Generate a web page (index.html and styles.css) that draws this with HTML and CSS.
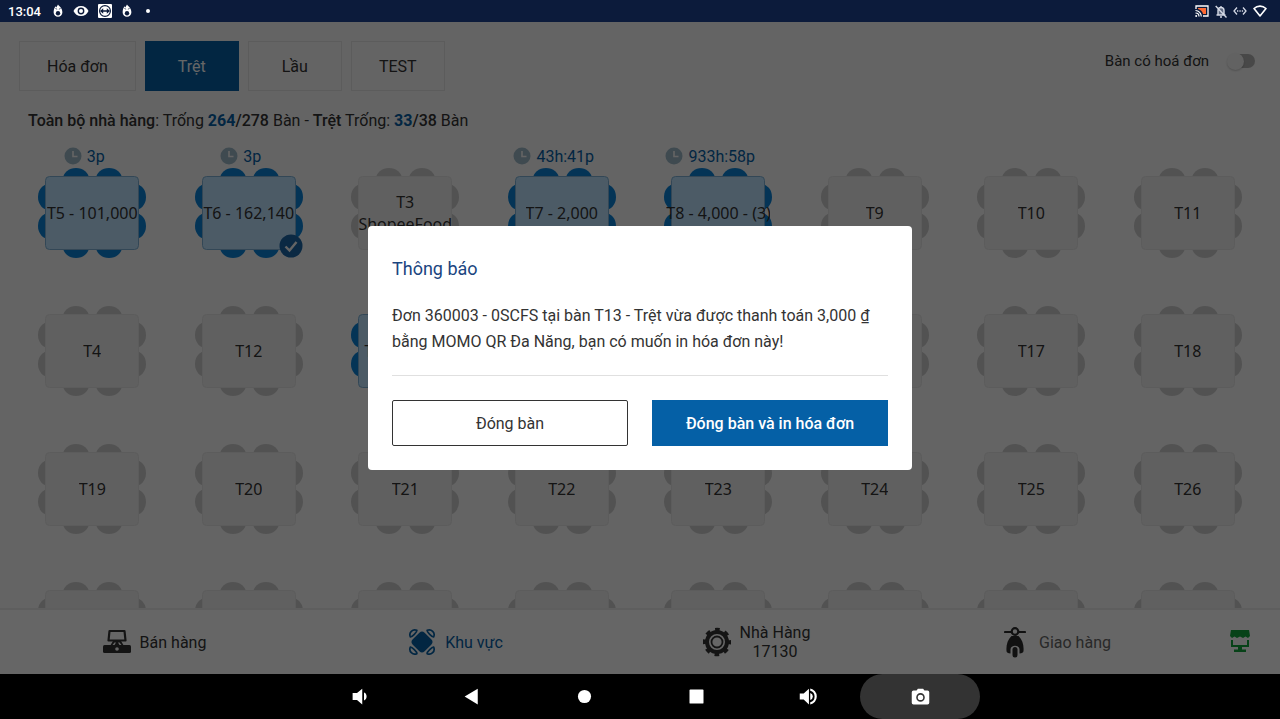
FILE: index.html
```html
<!DOCTYPE html>
<html lang="vi">
<head>
  <meta charset="UTF-8">
  <meta name="viewport" content="width=device-width, initial-scale=1.0">
  <title>Khu vực - Nhà Hàng</title>
  <link rel="stylesheet" href="styles.css">
</head>
<body>
  <!-- Shared shapes -->
  <svg class="defs" aria-hidden="true">
    <symbol id="table" viewBox="0 0 108 90">
      <g fill="currentColor">
        <ellipse cx="38" cy="11" rx="13" ry="11"/>
        <ellipse cx="71" cy="11" rx="13" ry="11"/>
        <ellipse cx="38" cy="79" rx="13" ry="11"/>
        <ellipse cx="71" cy="79" rx="13" ry="11"/>
        <ellipse cx="11" cy="29" rx="11" ry="13"/>
        <ellipse cx="11" cy="58" rx="11" ry="13"/>
        <ellipse cx="97" cy="29" rx="11" ry="13"/>
        <ellipse cx="97" cy="58" rx="11" ry="13"/>
      </g>
      <rect class="table-top" x="7.5" y="8.5" width="93" height="73" rx="4"/>
    </symbol>
    <symbol id="clock" viewBox="0 0 18 18">
      <circle cx="9" cy="9" r="8.5" fill="currentColor"/>
      <path d="M9 4v5.5h4.5" fill="none" stroke="#fafafa" stroke-width="1.6"/>
    </symbol>
    <symbol id="check" viewBox="0 0 24 24">
      <circle cx="12" cy="12" r="11.5" fill="currentColor"/>
      <path d="M6.5 12.5l4 4 7-8.5" fill="none" stroke="#fafafa" stroke-width="2.4"/>
    </symbol>
    <symbol id="flame" viewBox="0 0 12 16">
      <path d="M6 .5c1 2 5 3.500 5 9a5 5 0 0 1-10 0C1 6.500 2 4 3.200 2.500L4 4z" fill="#fff"/>
      <circle cx="6" cy="10.500" r="2.500" fill="#0c1b3b"/>
      <path d="M3 5l2 1M9 5L7 6" stroke="#0c1b3b" stroke-width=".8"/>
    </symbol>
  </svg>

  <div class="status-bar">
    <div class="status-left">
      <span class="time">13:04</span>
      <svg width="12" height="14"><use href="#flame"/></svg>
      <svg width="16" height="12" viewBox="0 0 16 12">
        <path d="M8 1C4.500 1 1.800 3 .5 6c1.300 3 4 5 7.500 5s6.200-2 7.500-5C14.200 3 11.500 1 8 1z" fill="#fff"/>
        <circle cx="8" cy="6" r="3.400" fill="#0c1b3b"/>
        <circle cx="8" cy="6" r="2" fill="#fff"/>
      </svg>
      <svg width="14" height="14" viewBox="0 0 14 14">
        <rect width="14" height="14" rx="1" fill="#fff"/>
        <circle cx="7" cy="7" r="5.400" fill="none" stroke="#0c1b3b" stroke-width="1.200"/>
        <path d="M2 7l3.200-2.800v2h3.600v-2L12 7 8.800 9.800v-2H5.200v2z" fill="#0c1b3b"/>
      </svg>
      <svg width="12" height="14"><use href="#flame"/></svg>
      <span class="dot"></span>
    </div>
    <div class="status-right">
      <svg width="14" height="12" viewBox="0 0 14 12">
        <path d="M1 4V1h12v10H8" fill="none" stroke="#fff" stroke-width="1.300"/>
        <path d="M3 3h8v6H8C7.500 6.500 5.500 4.500 3 4z" fill="#ff6b35"/>
        <path d="M.5 5.500A6 6 0 0 1 6.300 11.500M.5 8A3.500 3.500 0 0 1 4 11.500" fill="none" stroke="#fff" stroke-width="1.200"/>
        <circle cx="1.200" cy="11" r="1" fill="#fff"/>
      </svg>
      <svg width="12" height="13" viewBox="0 0 12 13">
        <path d="M3 10V5.500A3 3 0 0 1 9 5.500V10z" fill="#d5dae6" fill-opacity=".4"/>
        <path d="M1.500 10h9M3 10V5.500A3 3 0 0 1 9 5.500V10M6 1v1.500M5 12h2M.7 1L11.500 12.500" fill="none" stroke="#d5dae6" stroke-width="1.400"/>
      </svg>
      <svg width="14" height="10" viewBox="0 0 14 10" fill="none" stroke="#d5dae6" stroke-width="1.300">
        <path d="M4 1.500L1 5l3 3.500M10 1.500L13 5l-3 3.500"/>
        <path d="M4 5h1.300M6.400 5h1.300M8.800 5h1.300"/>
      </svg>
      <svg width="14" height="12" viewBox="0 0 14 12" fill="none" stroke="#fff" stroke-width="1.600">
        <path d="M7 11L1 3.500C4.500.3 9.500.3 13 3.500z" stroke-linejoin="round"/>
      </svg>
    </div>
  </div>

  <div class="app">
    <main class="area">
      <div class="toolbar">
        <div class="tabs">
          <button class="tab">Hóa đơn</button>
          <button class="tab active">Trệt</button>
          <button class="tab">Lầu</button>
          <button class="tab">TEST</button>
        </div>
        <label class="toggle" for="has-bill">
          Bàn có hoá đơn
          <input type="checkbox" id="has-bill">
        </label>
      </div>
      <p class="summary"><b>Toàn bộ nhà hàng</b>: Trống <b><i>264</i>/278</b> Bàn - <b>Trệt</b> Trống: <b><i>33</i>/38</b> Bàn</p>
      <div class="tables" id="tables"></div>
    </main>

    <nav class="menu">
      <a class="menu-item" href="#">
        <svg width="28" height="26" viewBox="0 0 28 26">
          <path d="M6.500 2h15l1 9.500h-17z" fill="none" stroke="currentColor" stroke-width="2.200" stroke-linejoin="round"/>
          <path d="M10 12h8l3 5H7z" fill="currentColor"/>
          <path d="M11.500 13.500h1.500l-1.500 2.500H9.500zM15 13.500h1.500l2 2.500h-2z" fill="#fff"/>
          <rect x="0" y="16" width="28" height="8" rx="1.500" fill="currentColor"/>
          <circle cx="14" cy="20" r="1.800" fill="#fff"/>
        </svg>
        <span>Bán hàng</span>
      </a>
      <a class="menu-item active" href="#">
        <svg width="28" height="28" viewBox="0 0 30 30">
          <rect x="6" y="6" width="18" height="18" rx="4" transform="rotate(45 15 15)" fill="#0560a6"/>
          <g fill="none" stroke="currentColor" stroke-width="1.800" stroke-linejoin="round">
            <path d="M2.500 9.500C.5 5 5 .5 9.500 2.500 10 4 4 10 2.500 9.500z"/>
            <path d="M27.500 9.500C29.500 5 25 .5 20.500 2.500 20 4 26 10 27.500 9.500z"/>
            <path d="M2.500 20.500C.5 25 5 29.500 9.500 27.500 10 26 4 20 2.500 20.500z"/>
            <path d="M27.500 20.500C29.500 25 25 29.500 20.500 27.500 20 26 26 20 27.500 20.500z"/>
          </g>
        </svg>
        <span>Khu vực</span>
      </a>
      <a class="menu-item" href="#">
        <svg width="28" height="30" viewBox="1 0 28 30">
          <g fill="none" stroke="currentColor">
            <circle cx="15" cy="15" r="10" stroke-width="4"/>
            <circle cx="15" cy="15" r="12.500" stroke-width="3.500" stroke-dasharray="4.600 5.217" stroke-dashoffset="2.300"/>
            <circle cx="15" cy="15" r="5.500" stroke-width="1.800"/>
          </g>
        </svg>
        <span>Nhà Hàng<br>17130</span>
      </a>
      <a class="menu-item muted" href="#">
        <svg width="22" height="32" viewBox="1 0 22 32">
          <g fill="none" stroke="#2b2b2b" stroke-width="2.200" stroke-linecap="round">
            <path d="M2 6h6M16 6h6"/>
            <circle cx="12" cy="5.500" r="3.300"/>
          </g>
          <path d="M8.500 10h7c4 4 5.500 9 5 15 0 1.500-1.500 2.500-4 2.500v-4c0-5-9-5-9 0v4c-2.500 0-4-1-4-2.500C3 19 4.500 14 8.500 10z" fill="#2b2b2b"/>
          <rect x="9.500" y="21" width="5" height="10.500" rx="2.500" fill="#2b2b2b"/>
        </svg>
        <span>Giao hàng</span>
      </a>
      <a class="menu-item shop" href="#" aria-label="Cửa hàng">
        <svg width="20" height="24" viewBox="0 0 20 24" fill="currentColor">
          <path d="M1 0h18l1 6-2 2-2.500-1.500L13 8l-3-1.500L7 8 4.500 6.500 2 8 0 6z"/>
          <path d="M1 10h2v5h14v-5h2v7h-7v2.500h4V22H4v-2.500h4V17H1z"/>
        </svg>
      </a>
    </nav>

    <div class="overlay">
      <section class="dialog" role="dialog" aria-labelledby="dialog-title">
        <h2 id="dialog-title">Thông báo</h2>
        <p>Đơn 360003 - 0SCFS tại bàn T13 - Trệt vừa được thanh toán 3,000 ₫ bằng MOMO QR Đa Năng, bạn có muốn in hóa đơn này!</p>
        <div class="dialog-actions">
          <button class="btn">Đóng bàn</button>
          <button class="btn btn-primary">Đóng bàn và in hóa đơn</button>
        </div>
      </section>
    </div>
  </div>

  <div class="nav-bar">
    <button aria-label="Giảm âm lượng">
      <svg viewBox="0 0 24 24"><path d="M3 8v8h5l6 5V3L8 8zM16 7.500c4 1 4 8 0 9z"/></svg>
    </button>
    <button aria-label="Quay lại">
      <svg viewBox="0 0 24 24"><path d="M3 12L18 3v18z"/></svg>
    </button>
    <button aria-label="Trang chủ">
      <svg viewBox="0 0 24 24"><circle cx="12" cy="12" r="7.500"/></svg>
    </button>
    <button aria-label="Gần đây">
      <svg viewBox="0 0 24 24"><rect x="4" y="4" width="16" height="16" rx="1"/></svg>
    </button>
    <button aria-label="Tăng âm lượng">
      <svg viewBox="0 0 24 24"><path d="M2 8.500v7h4.500l6 5.500V3l-6 5.500zM17 12a4.500 4.500 0 0 0-3-4v8a4.500 4.500 0 0 0 3-4zM14 2.800v2.500a7 7 0 0 1 0 13.400v2.500a9.400 9.400 0 0 0 0-18.400z"/></svg>
    </button>
    <button class="capture" aria-label="Chụp màn hình">
      <svg viewBox="0 0 24 24"><path d="M9 3L7.500 5H4a2 2 0 0 0-2 2v12a2 2 0 0 0 2 2h16a2 2 0 0 0 2-2V7a2 2 0 0 0-2-2h-3.500L15 3z"/><circle cx="12" cy="13" r="4" fill="none" stroke="#333" stroke-width="1.800"/></svg>
    </button>
  </div>

  <script>
    // Tables of the current area
    const tables = [
      { name: 'T5 - 101,000', time: '3p' },
      { name: 'T6 - 162,140', time: '3p', checked: true },
      { name: 'T3<br>ShopeeFood' },
      { name: 'T7 - 2,000', time: '43h:41p' },
      { name: 'T8 - 4,000 - (3)', time: '933h:58p' },
      { name: 'T9' }, { name: 'T10' }, { name: 'T11' },
      { name: 'T4' }, { name: 'T12' },
      { name: 'T13 - 3,000', busy: true }
    ];
    for (let i = 14; i <= 34; i++) {
      tables.push({ name: 'T' + i });
    }

    document.getElementById('tables').innerHTML = tables.map(t => `
      <div class="table-item ${t.time || t.busy ? 'busy' : ''}">
        <div class="table-time">${t.time ? `<svg width="18" height="18"><use href="#clock"/></svg>${t.time}` : ''}</div>
        <button class="table-btn">
          <svg class="table-shape" width="108" height="90"><use href="#table"/></svg>
          <span class="table-name">${t.name}</span>
          ${t.checked ? '<svg class="table-check" width="24" height="24"><use href="#check"/></svg>' : ''}
        </button>
      </div>`).join('');
  </script>
</body>
</html>
```
FILE: styles.css
```css
* {
  box-sizing: border-box;
}
body {
  margin: 0;
  height: 100vh;
  display: flex;
  flex-direction: column;
  overflow: hidden;
  font-family: Roboto, sans-serif;
  font-size: 16px;
  color: #333;
  background: #000;
}
button {
  font: inherit;
  color: inherit;
  cursor: pointer;
}
svg {
  flex: none;
}
.defs {
  position: absolute;
  width: 0;
  height: 0;
}

/* Status bar */
.status-bar {
  display: flex;
  flex: none;
  justify-content: space-between;
  height: 22px;
  padding: 0 13px 0 8px;
  background: #0c1b3b;
  color: #fff;
}
.status-left,
.status-right {
  display: flex;
  align-items: center;
  gap: 6px;
}
.status-left {
  gap: 9px;
}
.time {
  margin-right: 2px;
  font-size: 13px;
  font-weight: 500;
}
.dot {
  width: 4px;
  height: 4px;
  margin-left: 4px;
  border-radius: 50%;
  background: #fff;
}

/* App */
.app {
  position: relative;
  flex: 1;
  min-height: 0;
  display: flex;
  flex-direction: column;
  background: #fafafa;
}
.area {
  flex: 1;
  min-height: 0;
  overflow: hidden;
  padding-top: 19px;
}
.toolbar {
  display: flex;
  justify-content: space-between;
  padding: 0 25px 0 19px;
}
.tabs {
  display: flex;
  gap: 9px;
}
.tab {
  min-width: 94px;
  height: 50px;
  padding: 0 27px;
  border: 1px solid #e6e6e6;
  background: #fafafa;
}
.tab.active {
  border-color: #0560a6;
  background: #0560a6;
  color: #fff;
}
.toggle {
  display: flex;
  align-items: center;
  height: 40px;
  gap: 18px;
  font-size: 15px;
}
.toggle input {
  appearance: none;
  display: flex;
  align-items: center;
  width: 28px;
  height: 14px;
  margin: 0;
  border-radius: 7px;
  background: linear-gradient(90deg, transparent 8px, #b4b4b4 8px);
}
.toggle input::before {
  content: "";
  width: 17px;
  height: 17px;
  flex: none;
  border-radius: 50%;
  background: #f5f5f5;
  box-shadow: 0 1px 2px rgba(0,0,0,0.2);
}
.summary {
  margin: 20px 28px 0;
  line-height: 20px;
}
.summary b {
  font-weight: 500;
}
.summary i {
  font-style: normal;
  font-weight: 700;
  color: #0560a6;
}

/* Tables */
.tables {
  display: grid;
  grid-template-columns: repeat(8, 1fr);
  row-gap: 24px;
  padding: 0 14px;
  margin-top: 13px;
}
.table-item {
  --top: #f0f0f0;
  --edge: #e6e6e6;
  display: flex;
  flex-direction: column;
  align-items: center;
  color: #cdcdcd;
}
.table-item.busy {
  --top: #bfe3ff;
  --edge: #7fb2d8;
  color: #0a82d8;
}
.table-time {
  display: flex;
  align-items: center;
  gap: 5px;
  height: 24px;
  padding-right: 16px;
  color: #0560a6;
}
.table-time svg {
  color: #9fb9c8;
}
.table-btn {
  position: relative;
  display: grid;
  place-items: center;
  width: 108px;
  height: 90px;
  padding: 0;
  border: 0;
  background: none;
}
.table-shape,
.table-name {
  grid-area: 1 / 1;
}
.table-top {
  fill: var(--top);
  stroke: var(--edge);
}
.table-name {
  position: relative;
  max-width: 104px;
  overflow: hidden;
  font-family: "Noto Sans", sans-serif;
  line-height: 22px;
  white-space: nowrap;
  color: #333;
}
.table-check {
  position: absolute;
  right: 0;
  bottom: 0;
  color: #1c68a8;
}

/* Bottom menu */
.menu {
  display: grid;
  grid-template-columns: repeat(4, 1fr) 64px;
  flex: none;
  height: 66px;
  padding: 0 8px 0 4px;
  border-top: 2px solid #ebebeb;
  background: #fff;
}
.menu-item {
  display: flex;
  align-items: center;
  justify-content: center;
  gap: 9px;
  line-height: 19px;
  text-align: center;
  text-decoration: none;
  color: #333;
}
.menu-item.active {
  color: #0560a6;
}
.menu-item.muted {
  gap: 13px;
  color: #666;
}
.menu-item.shop {
  color: #12a53c;
}

/* Dialog */
.overlay {
  position: absolute;
  inset: 0;
  display: flex;
  align-items: center;
  justify-content: center;
  background: rgba(0,0,0,0.6);
}
.dialog {
  width: 544px;
  max-width: 90%;
  padding: 24px;
  border-radius: 4px;
  background: #fff;
}
.dialog h2 {
  margin: 0;
  font-size: 18px;
  font-weight: 400;
  line-height: 38px;
  color: #1b4580;
}
.dialog p {
  margin: 15px 0 0;
  padding-bottom: 20px;
  border-bottom: 1px solid #e0e0e0;
  line-height: 26px;
}
.dialog-actions {
  display: grid;
  grid-template-columns: 1fr 1fr;
  gap: 24px;
  margin-top: 24px;
}
.btn {
  height: 46px;
  border: 1px solid #333;
  border-radius: 2px;
  background: #fff;
}
.btn-primary {
  border: 0;
  border-radius: 0;
  background: #0560a6;
  color: #fff;
  font-weight: 500;
}

/* Android navigation */
.nav-bar {
  display: flex;
  flex: none;
  justify-content: center;
  height: 45px;
}
.nav-bar button {
  display: flex;
  align-items: center;
  justify-content: center;
  width: 120px;
  margin: 0 -4px;
  border: 0;
  border-radius: 23px;
  background: none;
}
.nav-bar svg {
  fill: #fff;
  width: 21px;
  height: 21px;
}
.nav-bar .capture {
  background: #333;
}
```
